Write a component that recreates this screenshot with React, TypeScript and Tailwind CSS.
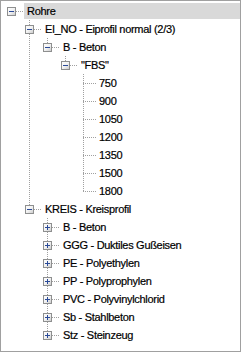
import React from "react";

type Node = { label: string; children?: Node[]; expanded?: boolean; selected?: boolean };

const leaves = ["750", "900", "1050", "1200", "1350", "1500", "1800"].map((l) => ({ label: l }));

const tree: Node[] = [
  {
    label: "Rohre",
    expanded: true,
    selected: true,
    children: [
      {
        label: "EI_NO - Eiprofil normal (2/3)",
        expanded: true,
        children: [
          {
            label: "B - Beton",
            expanded: true,
            children: [{ label: '"FBS"', expanded: true, children: leaves }],
          },
        ],
      },
      {
        label: "KREIS - Kreisprofil",
        expanded: true,
        children: [
          { label: "B - Beton", children: [{ label: "x" }] },
          { label: "GGG - Duktiles Gußeisen", children: [{ label: "x" }] },
          { label: "PE - Polyethylen", children: [{ label: "x" }] },
          { label: "PP - Polyprophylen", children: [{ label: "x" }] },
          { label: "PVC - Polyvinylchlorid", children: [{ label: "x" }] },
          { label: "Sb - Stahlbeton", children: [{ label: "x" }] },
          { label: "Stz - Steinzeug", children: [{ label: "x" }] },
        ],
      },
    ],
  },
];

type Row = {
  node: Node;
  level: number;
  hasNext: boolean;
  hasAbove: boolean;
  ancestorsNext: boolean[];
};

function flatten(nodes: Node[], level: number, ancestorsNext: boolean[], isRoot: boolean, out: Row[]) {
  nodes.forEach((n, i) => {
    const hasNext = i < nodes.length - 1;
    out.push({ node: n, level, hasNext, hasAbove: !isRoot || i > 0, ancestorsNext });
    if (n.children && n.expanded) flatten(n.children, level + 1, [...ancestorsNext, hasNext], false, out);
  });
  return out;
}

const rows = flatten(tree, 0, [], true, []);
const LINE = "#a0a0a0";

function Dotted({ x1, y1, x2, y2 }: { x1: number; y1: number; x2: number; y2: number }) {
  return (
    <line x1={x1} y1={y1} x2={x2} y2={y2} stroke={LINE} strokeWidth={1} strokeDasharray="1 1" shapeRendering="crispEdges" />
  );
}

function Box({ open }: { open: boolean }) {
  return (
    <g shapeRendering="crispEdges">
      <rect x={5.5} y={5.5} width={8} height={8} fill="url(#boxg)" stroke="#8e8f8f" />
      <rect x={7} y={9} width={5} height={1} fill="#2a4a98" />
      {!open && <rect x={9} y={7} width={1} height={5} fill="#2a4a98" />}
    </g>
  );
}

function RowView({ r }: { r: Row }) {
  const hasKids = !!r.node.children;
  return (
    <div className="flex h-[18px] items-start">
      {r.ancestorsNext.map((a, k) => (
        <svg key={k} width={18} height={18} className="shrink-0">
          {a && k > 0 && <Dotted x1={9.5} y1={0} x2={9.5} y2={18} />}
        </svg>
      ))}
      <svg width={22} height={18} className="shrink-0">
        {r.hasAbove && <Dotted x1={9.5} y1={0} x2={9.5} y2={10} />}
        {r.hasNext && <Dotted x1={9.5} y1={10} x2={9.5} y2={18} />}
        {hasKids ? <Dotted x1={14} y1={9.5} x2={22} y2={9.5} /> : <Dotted x1={9} y1={9.5} x2={22} y2={9.5} />}
        {hasKids && <Box open={!!r.node.expanded} />}
      </svg>
      <div
        className={`mt-[1px] h-[16px] flex-1 whitespace-nowrap pl-[3px] text-[11px] leading-[16px] tracking-[-0.3px] text-black [-webkit-text-stroke:0.2px_#000] ${
          r.node.selected ? "bg-[#d9d9d9]" : ""
        }`}
      >
        {r.node.label}
      </div>
    </div>
  );
}

export default function App() {
  return (
    <div
      className="h-[352px] w-[241px] overflow-hidden border border-[#a0a0a0] bg-white pl-[1px] pt-[1px]"
      style={{ fontFamily: '"Liberation Sans", Arial, sans-serif' }}
    >
      <svg width={0} height={0} className="absolute">
        <defs>
          <linearGradient id="boxg" x1="0" y1="0" x2="1" y2="1">
            <stop offset="0" stopColor="#ffffff" />
            <stop offset="0.5" stopColor="#f2f2f2" />
            <stop offset="1" stopColor="#c8c8c8" />
          </linearGradient>
        </defs>
      </svg>
      {rows.map((r, i) => (
        <RowView key={i} r={r} />
      ))}
    </div>
  );
}
